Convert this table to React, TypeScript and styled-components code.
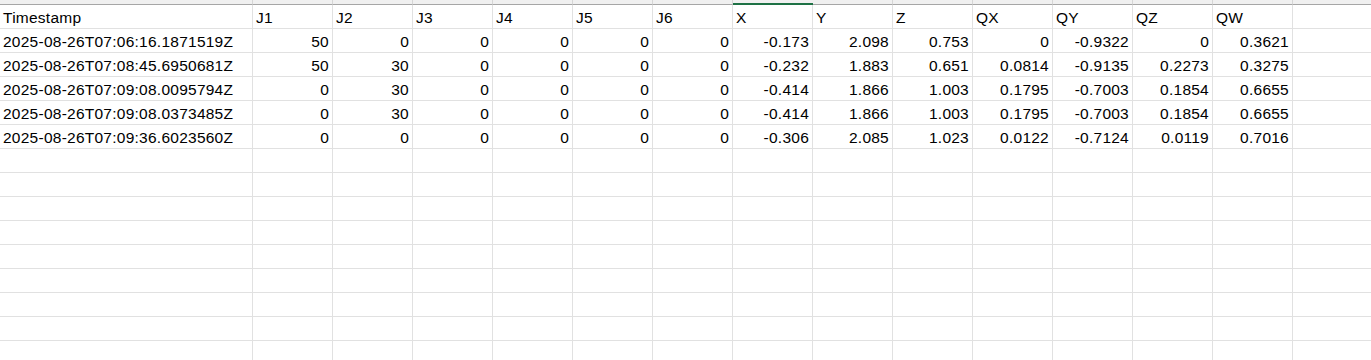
import React from 'react';
import styled, { createGlobalStyle } from 'styled-components';

const GlobalStyle = createGlobalStyle`
  html, body {
    margin: 0;
    padding: 0;
    background: #ffffff;
    overflow: hidden;
  }
`;

const columns = ['Timestamp', 'J1', 'J2', 'J3', 'J4', 'J5', 'J6', 'X', 'Y', 'Z', 'QX', 'QY', 'QZ', 'QW', ''];

const data: string[][] = [
  ['2025-08-26T07:06:16.1871519Z', '50', '0', '0', '0', '0', '0', '-0.173', '2.098', '0.753', '0', '-0.9322', '0', '0.3621'],
  ['2025-08-26T07:08:45.6950681Z', '50', '30', '0', '0', '0', '0', '-0.232', '1.883', '0.651', '0.0814', '-0.9135', '0.2273', '0.3275'],
  ['2025-08-26T07:09:08.0095794Z', '0', '30', '0', '0', '0', '0', '-0.414', '1.866', '1.003', '0.1795', '-0.7003', '0.1854', '0.6655'],
  ['2025-08-26T07:09:08.0373485Z', '0', '30', '0', '0', '0', '0', '-0.414', '1.866', '1.003', '0.1795', '-0.7003', '0.1854', '0.6655'],
  ['2025-08-26T07:09:36.6023560Z', '0', '0', '0', '0', '0', '0', '-0.306', '2.085', '1.023', '0.0122', '-0.7124', '0.0119', '0.7016'],
];

const EMPTY_ROWS = 9;
const SELECTED_COL = 7;

const Sheet = styled.div`
  display: grid;
  grid-template-columns: 253px repeat(14, 80px);
  width: 1371px;
  height: 360px;
  overflow: hidden;
  font-family: 'Liberation Sans', Arial, sans-serif;
  font-size: 15.5px;
  letter-spacing: 0.25px;
  color: #000000;
`;

const HeadStrip = styled.div<{ $selected?: boolean }>`
  height: 5px;
  box-sizing: border-box;
  background: #f0f0f0;
  border-right: 1px solid #d6d6d6;
  border-bottom: ${(p) => (p.$selected ? '2px solid #1e7145' : '1px solid #a6a6a6')};
  margin-right: ${(p) => (p.$selected ? '-1px' : '0')};
`;

const Cell = styled.div<{ $numeric?: boolean }>`
  height: 24px;
  box-sizing: border-box;
  border-right: 1px solid #e1e1e1;
  border-bottom: 1px solid #e1e1e1;
  padding: 1px 3px 0 3px;
  line-height: 23px;
  white-space: nowrap;
  overflow: hidden;
  text-align: ${(p) => (p.$numeric ? 'right' : 'left')};
`;

export default function App() {
  return (
    <>
      <GlobalStyle />
      <Sheet>
        {columns.map((_, i) => (
          <HeadStrip key={`h${i}`} $selected={i === SELECTED_COL} />
        ))}
        {columns.map((c, i) => (
          <Cell key={`c${i}`}>{c}</Cell>
        ))}
        {data.map((row, r) =>
          columns.map((_, i) => (
            <Cell key={`r${r}-${i}`} $numeric={i > 0}>
              {row[i] ?? ''}
            </Cell>
          ))
        )}
        {Array.from({ length: EMPTY_ROWS }).map((_, r) =>
          columns.map((_, i) => <Cell key={`e${r}-${i}`} />)
        )}
      </Sheet>
    </>
  );
}
